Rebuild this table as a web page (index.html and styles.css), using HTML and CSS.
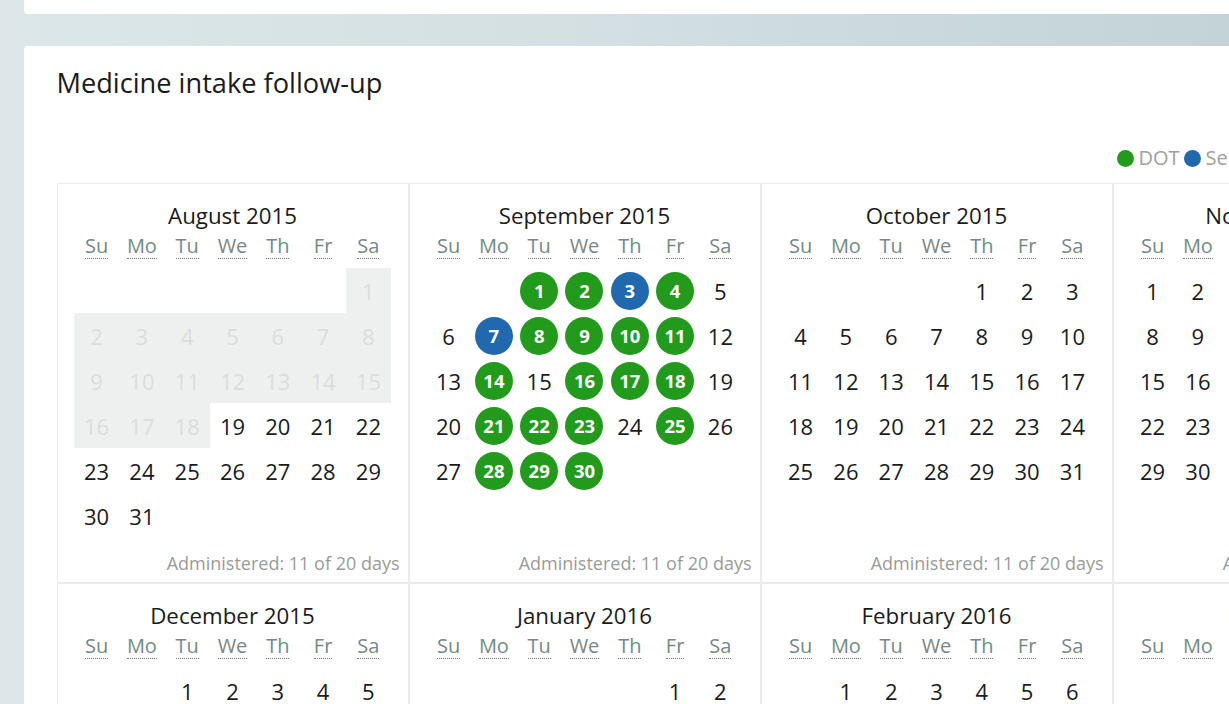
FILE: index.html
```html
<!DOCTYPE html>
<html lang="en">
<head>
<meta charset="utf-8">
<title>Medicine intake follow-up</title>
<link rel="stylesheet" href="styles.css">
</head>
<body>
<div class="page">
  <div class="topcard"></div>
  <section class="card">
    <h2 class="card-title">Medicine intake follow-up</h2>
    <div class="legend">
      <div class="legend-items">
        <span class="legend-item"><i class="ldot g"></i>DOT</span>
        <span class="legend-item"><i class="ldot b"></i>Self-administered</span>
      </div>
    </div>
    <div class="months">
      <!-- August 2015 -->
      <div class="month">
        <div class="month-title">August 2015</div>
        <div class="wk"><abbr>Su</abbr><abbr>Mo</abbr><abbr>Tu</abbr><abbr>We</abbr><abbr>Th</abbr><abbr>Fr</abbr><abbr>Sa</abbr></div>
        <div class="days">
          <span class="d off c7">1</span>
          <span class="d off">2</span><span class="d off">3</span><span class="d off">4</span><span class="d off">5</span><span class="d off">6</span><span class="d off">7</span><span class="d off">8</span>
          <span class="d off">9</span><span class="d off">10</span><span class="d off">11</span><span class="d off">12</span><span class="d off">13</span><span class="d off">14</span><span class="d off">15</span>
          <span class="d off">16</span><span class="d off">17</span><span class="d off">18</span><span class="d">19</span><span class="d">20</span><span class="d">21</span><span class="d">22</span>
          <span class="d">23</span><span class="d">24</span><span class="d">25</span><span class="d">26</span><span class="d">27</span><span class="d">28</span><span class="d">29</span>
          <span class="d">30</span><span class="d">31</span>
        </div>
        <div class="month-foot">Administered: 11 of 20 days</div>
      </div>
      <!-- September 2015 -->
      <div class="month">
        <div class="month-title">September 2015</div>
        <div class="wk"><abbr>Su</abbr><abbr>Mo</abbr><abbr>Tu</abbr><abbr>We</abbr><abbr>Th</abbr><abbr>Fr</abbr><abbr>Sa</abbr></div>
        <div class="days">
          <span class="d c3"><b class="dot g">1</b></span><span class="d"><b class="dot g">2</b></span><span class="d"><b class="dot b">3</b></span><span class="d"><b class="dot g">4</b></span><span class="d">5</span>
          <span class="d">6</span><span class="d"><b class="dot b">7</b></span><span class="d"><b class="dot g">8</b></span><span class="d"><b class="dot g">9</b></span><span class="d"><b class="dot g">10</b></span><span class="d"><b class="dot g">11</b></span><span class="d">12</span>
          <span class="d">13</span><span class="d"><b class="dot g">14</b></span><span class="d">15</span><span class="d"><b class="dot g">16</b></span><span class="d"><b class="dot g">17</b></span><span class="d"><b class="dot g">18</b></span><span class="d">19</span>
          <span class="d">20</span><span class="d"><b class="dot g">21</b></span><span class="d"><b class="dot g">22</b></span><span class="d"><b class="dot g">23</b></span><span class="d">24</span><span class="d"><b class="dot g">25</b></span><span class="d">26</span>
          <span class="d">27</span><span class="d"><b class="dot g">28</b></span><span class="d"><b class="dot g">29</b></span><span class="d"><b class="dot g">30</b></span>
        </div>
        <div class="month-foot">Administered: 11 of 20 days</div>
      </div>
      <!-- October 2015 -->
      <div class="month">
        <div class="month-title">October 2015</div>
        <div class="wk"><abbr>Su</abbr><abbr>Mo</abbr><abbr>Tu</abbr><abbr>We</abbr><abbr>Th</abbr><abbr>Fr</abbr><abbr>Sa</abbr></div>
        <div class="days">
          <span class="d c5">1</span><span class="d">2</span><span class="d">3</span>
          <span class="d">4</span><span class="d">5</span><span class="d">6</span><span class="d">7</span><span class="d">8</span><span class="d">9</span><span class="d">10</span>
          <span class="d">11</span><span class="d">12</span><span class="d">13</span><span class="d">14</span><span class="d">15</span><span class="d">16</span><span class="d">17</span>
          <span class="d">18</span><span class="d">19</span><span class="d">20</span><span class="d">21</span><span class="d">22</span><span class="d">23</span><span class="d">24</span>
          <span class="d">25</span><span class="d">26</span><span class="d">27</span><span class="d">28</span><span class="d">29</span><span class="d">30</span><span class="d">31</span>
        </div>
        <div class="month-foot">Administered: 11 of 20 days</div>
      </div>
      <!-- November 2015 -->
      <div class="month">
        <div class="month-title">November 2015</div>
        <div class="wk"><abbr>Su</abbr><abbr>Mo</abbr><abbr>Tu</abbr><abbr>We</abbr><abbr>Th</abbr><abbr>Fr</abbr><abbr>Sa</abbr></div>
        <div class="days">
          <span class="d">1</span><span class="d">2</span><span class="d">3</span><span class="d">4</span><span class="d">5</span><span class="d">6</span><span class="d">7</span>
          <span class="d">8</span><span class="d">9</span><span class="d">10</span><span class="d">11</span><span class="d">12</span><span class="d">13</span><span class="d">14</span>
          <span class="d">15</span><span class="d">16</span><span class="d">17</span><span class="d">18</span><span class="d">19</span><span class="d">20</span><span class="d">21</span>
          <span class="d">22</span><span class="d">23</span><span class="d">24</span><span class="d">25</span><span class="d">26</span><span class="d">27</span><span class="d">28</span>
          <span class="d">29</span><span class="d">30</span>
        </div>
        <div class="month-foot">Administered: 11 of 20 days</div>
      </div>
      <!-- December 2015 -->
      <div class="month">
        <div class="month-title">December 2015</div>
        <div class="wk"><abbr>Su</abbr><abbr>Mo</abbr><abbr>Tu</abbr><abbr>We</abbr><abbr>Th</abbr><abbr>Fr</abbr><abbr>Sa</abbr></div>
        <div class="days">
          <span class="d c3">1</span><span class="d">2</span><span class="d">3</span><span class="d">4</span><span class="d">5</span>
          <span class="d">6</span><span class="d">7</span><span class="d">8</span><span class="d">9</span><span class="d">10</span><span class="d">11</span><span class="d">12</span>
          <span class="d">13</span><span class="d">14</span><span class="d">15</span><span class="d">16</span><span class="d">17</span><span class="d">18</span><span class="d">19</span>
          <span class="d">20</span><span class="d">21</span><span class="d">22</span><span class="d">23</span><span class="d">24</span><span class="d">25</span><span class="d">26</span>
          <span class="d">27</span><span class="d">28</span><span class="d">29</span><span class="d">30</span><span class="d">31</span>
        </div>
        <div class="month-foot">Administered: 11 of 20 days</div>
      </div>
      <!-- January 2016 -->
      <div class="month">
        <div class="month-title">January 2016</div>
        <div class="wk"><abbr>Su</abbr><abbr>Mo</abbr><abbr>Tu</abbr><abbr>We</abbr><abbr>Th</abbr><abbr>Fr</abbr><abbr>Sa</abbr></div>
        <div class="days">
          <span class="d c6">1</span><span class="d">2</span>
          <span class="d">3</span><span class="d">4</span><span class="d">5</span><span class="d">6</span><span class="d">7</span><span class="d">8</span><span class="d">9</span>
          <span class="d">10</span><span class="d">11</span><span class="d">12</span><span class="d">13</span><span class="d">14</span><span class="d">15</span><span class="d">16</span>
          <span class="d">17</span><span class="d">18</span><span class="d">19</span><span class="d">20</span><span class="d">21</span><span class="d">22</span><span class="d">23</span>
          <span class="d">24</span><span class="d">25</span><span class="d">26</span><span class="d">27</span><span class="d">28</span><span class="d">29</span><span class="d">30</span>
          <span class="d">31</span>
        </div>
        <div class="month-foot">Administered: 11 of 20 days</div>
      </div>
      <!-- February 2016 -->
      <div class="month">
        <div class="month-title">February 2016</div>
        <div class="wk"><abbr>Su</abbr><abbr>Mo</abbr><abbr>Tu</abbr><abbr>We</abbr><abbr>Th</abbr><abbr>Fr</abbr><abbr>Sa</abbr></div>
        <div class="days">
          <span class="d c2">1</span><span class="d">2</span><span class="d">3</span><span class="d">4</span><span class="d">5</span><span class="d">6</span>
          <span class="d">7</span><span class="d">8</span><span class="d">9</span><span class="d">10</span><span class="d">11</span><span class="d">12</span><span class="d">13</span>
          <span class="d">14</span><span class="d">15</span><span class="d">16</span><span class="d">17</span><span class="d">18</span><span class="d">19</span><span class="d">20</span>
          <span class="d">21</span><span class="d">22</span><span class="d">23</span><span class="d">24</span><span class="d">25</span><span class="d">26</span><span class="d">27</span>
          <span class="d">28</span><span class="d">29</span>
        </div>
        <div class="month-foot">Administered: 11 of 20 days</div>
      </div>
      <!-- March 2016 -->
      <div class="month">
        <div class="month-title">March 2016</div>
        <div class="wk"><abbr>Su</abbr><abbr>Mo</abbr><abbr>Tu</abbr><abbr>We</abbr><abbr>Th</abbr><abbr>Fr</abbr><abbr>Sa</abbr></div>
        <div class="days">
          <span class="d c3">1</span><span class="d">2</span><span class="d">3</span><span class="d">4</span><span class="d">5</span>
          <span class="d">6</span><span class="d">7</span><span class="d">8</span><span class="d">9</span><span class="d">10</span><span class="d">11</span><span class="d">12</span>
          <span class="d">13</span><span class="d">14</span><span class="d">15</span><span class="d">16</span><span class="d">17</span><span class="d">18</span><span class="d">19</span>
          <span class="d">20</span><span class="d">21</span><span class="d">22</span><span class="d">23</span><span class="d">24</span><span class="d">25</span><span class="d">26</span>
          <span class="d">27</span><span class="d">28</span><span class="d">29</span><span class="d">30</span><span class="d">31</span>
        </div>
        <div class="month-foot">Administered: 11 of 20 days</div>
      </div>
    </div>
  </section>
</div>
</body>
</html>
```

FILE: styles.css
```css
html, body {
  margin: 0;
  padding: 0;
  overflow: hidden;
}
body {
  font-family: "Open Sans", "Liberation Sans", sans-serif;
  color: #222;
  background: linear-gradient(90deg, #dde7ea 0%, #d3dfe2 50%, #c3d3d6 100%);
  min-height: 704px;
}
.page {
  padding-left: 24px;
  width: 1560px;
}
.topcard {
  height: 14px;
  background: #fff;
  border-radius: 0 0 0 4px;
  margin-bottom: 32px;
}
.card {
  background: #fff;
  border-radius: 4px 0 0 0;
  padding: 19px 0 40px 32.5px;
}
.card-title {
  margin: 0;
  font-size: 27.2px;
  line-height: 36px;
  font-weight: 400;
  color: #1b1b1b;
}
.legend {
  display: grid;
  grid-template-columns: repeat(4, 352px);
  margin-top: 45px;
  height: 24px;
  margin-bottom: 13px;
}
.legend-items {
  grid-column: 4;
  padding-left: 4px;
  display: flex;
  align-items: center;
  gap: 4px;
  white-space: nowrap;
}
.legend-item {
  display: flex;
  align-items: center;
  gap: 5px;
  font-size: 20px;
  line-height: 24px;
  color: #a0a0a0;
}
.ldot {
  width: 17px;
  height: 17px;
  border-radius: 50%;
  display: inline-block;
}
.ldot.g, .dot.g { background: #229a1b; }
.ldot.b, .dot.b { background: #2169ae; }

.months {
  display: grid;
  grid-template-columns: repeat(4, 352px);
}
.month {
  border: 1px solid #ebebeb;
  padding: 17px 8px 8px 8px;
  display: flex;
  flex-direction: column;
  align-items: center;
}
.month-title {
  font-size: 22.3px;
  line-height: 30px;
  color: #1b1b1b;
}
.wk {
  margin-top: 2px;
  display: grid;
  grid-template-columns: repeat(7, 45.3px);
  justify-items: center;
}
.wk abbr {
  font-size: 20px;
  line-height: 25px;
  color: #788887;
  text-decoration: none;
  border-bottom: 1px dotted #6f7e7d;
}
.days {
  margin-top: 9px;
  display: grid;
  grid-template-columns: repeat(7, 45.3px);
  grid-template-rows: repeat(6, 45px);
}
.d {
  display: flex;
  align-items: center;
  justify-content: center;
  font-size: 22px;
  color: #1b1b1b;
}
.d.off {
  background: #eef0ef;
  color: #dadddc;
}
.c2 { grid-column-start: 2; }
.c3 { grid-column-start: 3; }
.c5 { grid-column-start: 5; }
.c6 { grid-column-start: 6; }
.c7 { grid-column-start: 7; }
.dot {
  width: 38px;
  height: 38px;
  border-radius: 50%;
  display: flex;
  align-items: center;
  justify-content: center;
  color: #fff;
  font-weight: 700;
  font-size: 18.5px;
}
.month-foot {
  align-self: flex-end;
  margin-top: 14px;
  font-size: 18px;
  line-height: 22px;
  color: #9a9a9a;
}
```
